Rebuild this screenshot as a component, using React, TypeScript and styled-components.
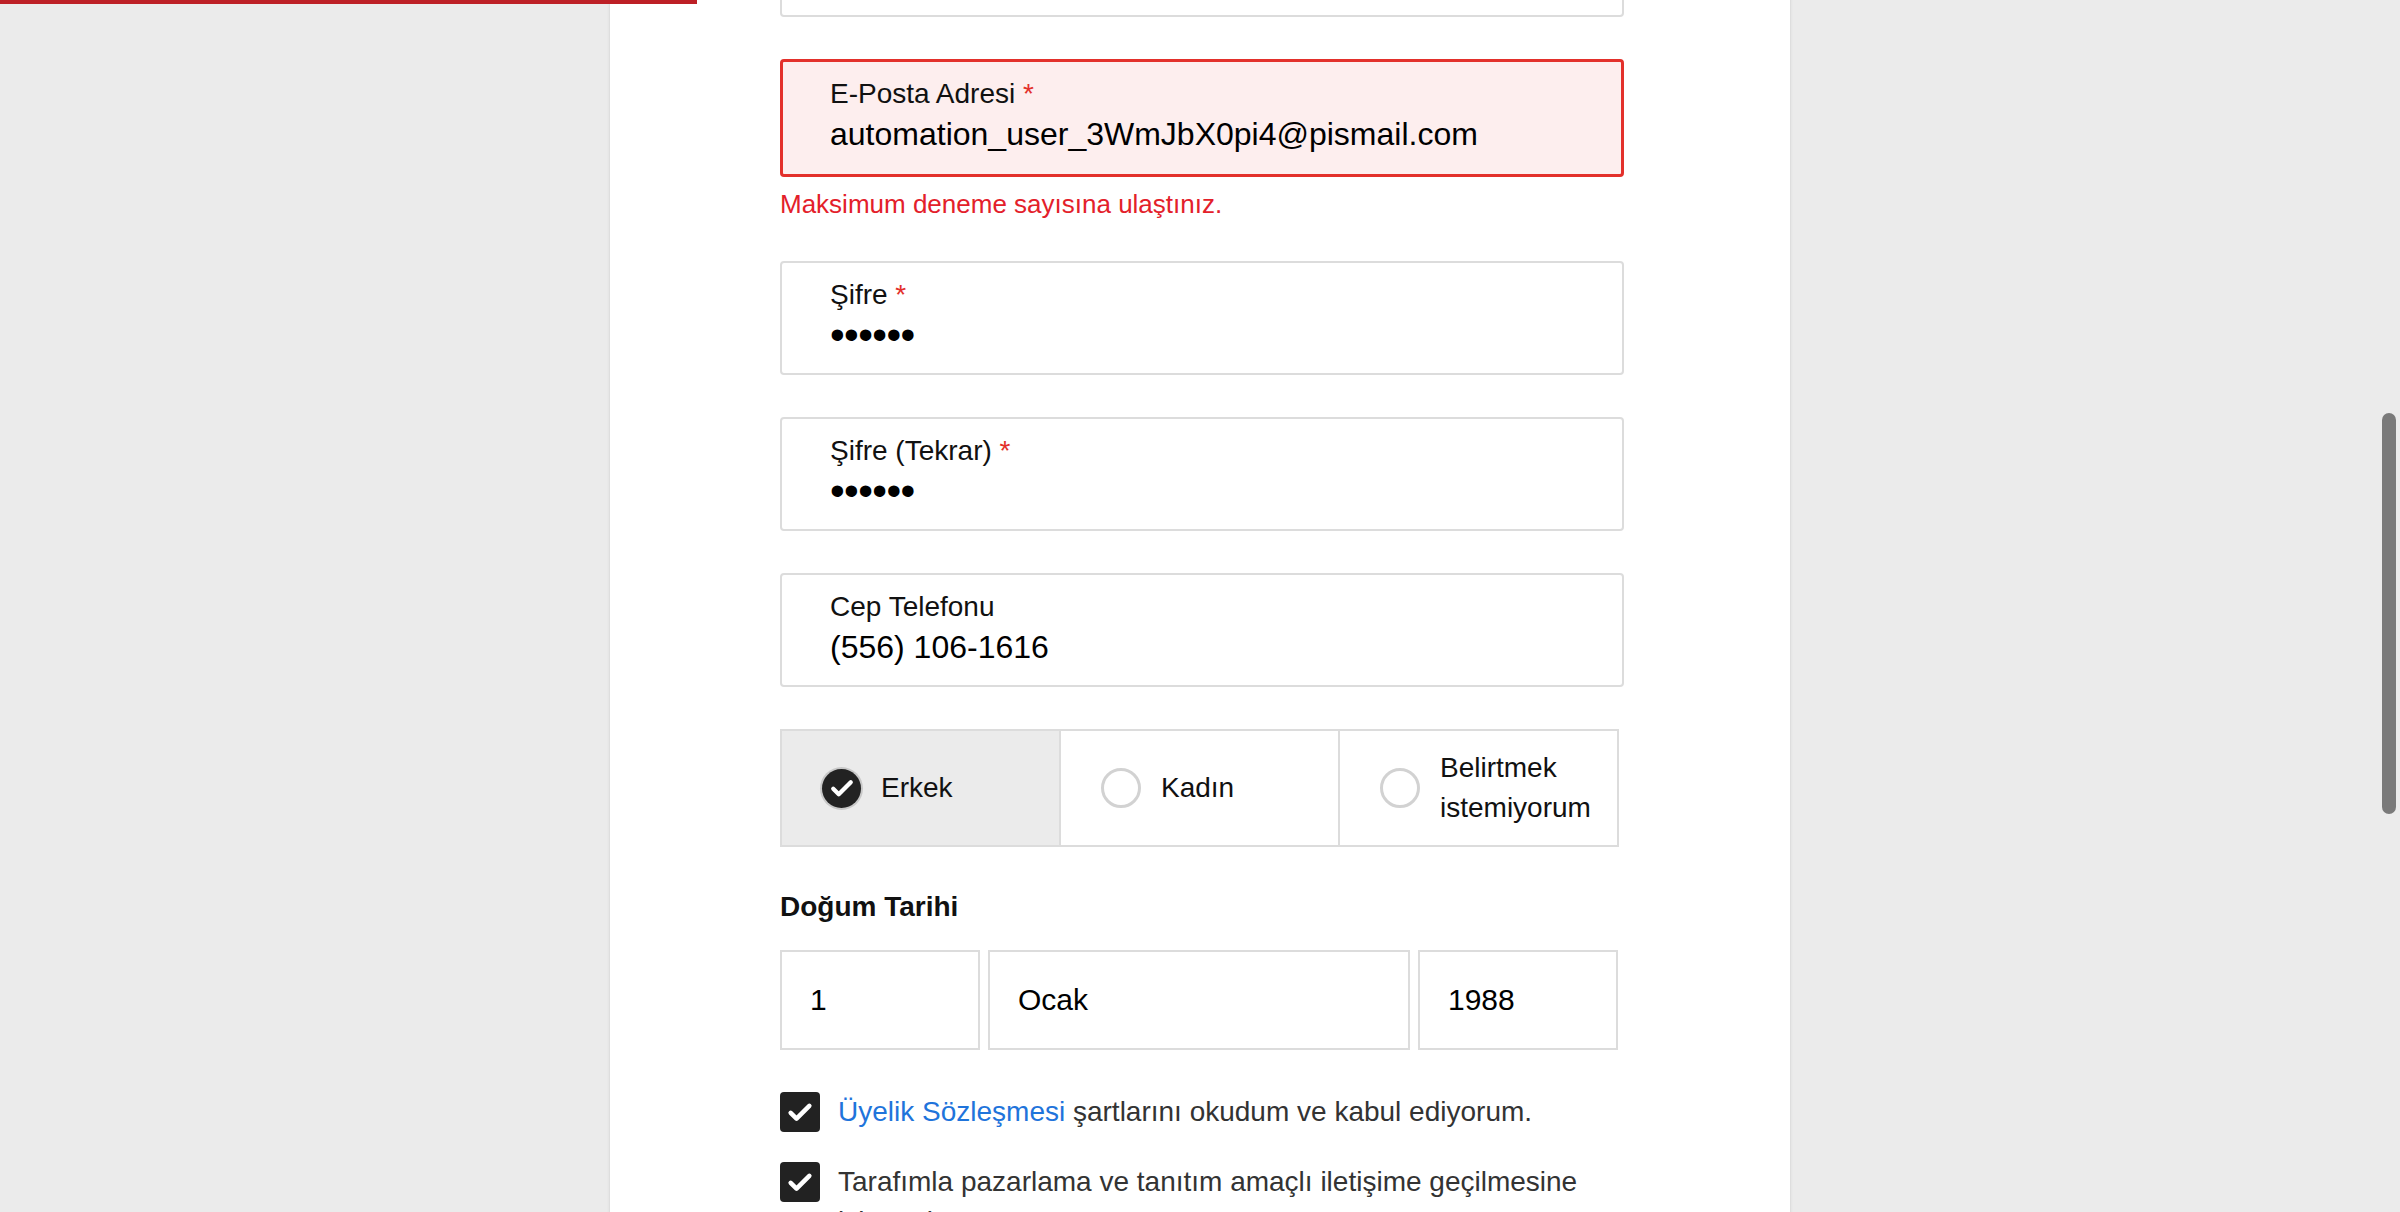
import React from "react";
import styled, { createGlobalStyle } from "styled-components";

const GlobalStyle = createGlobalStyle`
  html, body {
    margin: 0;
    padding: 0;
  }
  body {
    background: #ebebeb;
    font-family: "Liberation Sans", Arial, Helvetica, sans-serif;
    color: #111;
    height: 1212px;
    overflow: hidden;
  }
`;

const TopProgress = styled.div`
  position: fixed;
  top: 0;
  left: 0;
  width: 697px;
  height: 4px;
  background: #bd2026;
  z-index: 5;
`;

const ScrollThumb = styled.div`
  position: fixed;
  top: 413px;
  right: 4px;
  width: 14px;
  height: 401px;
  border-radius: 7px;
  background: #7a7a7a;
`;

const Panel = styled.main`
  box-sizing: border-box;
  width: 1182px;
  min-height: 1212px;
  margin: 0 auto;
  padding: 0 166px 0 170px;
  background: #fff;
  border-left: 1px solid #dedede;
  border-right: 1px solid #dedede;
  box-shadow: 0 0 3px rgba(0, 0, 0, 0.06);
`;

// page is scrolled down, the field above the e-mail is only half visible
const Form = styled.form`
  display: flex;
  flex-direction: column;
  gap: 42px;
  margin-top: -97px;
`;

const FieldGroup = styled.div`
  display: flex;
  flex-direction: column;
`;

const Field = styled.div<{ $error?: boolean }>`
  box-sizing: border-box;
  height: ${(p) => (p.$error ? "118px" : "114px")};
  padding: 14px 0 0 ${(p) => (p.$error ? "47px" : "48px")};
  border: ${(p) => (p.$error ? "3px solid #e3302b" : "2px solid #dcdcdc")};
  border-radius: 4px;
  background: ${(p) => (p.$error ? "#fdeeee" : "#fff")};
`;

const Label = styled.div`
  font-size: 28px;
  line-height: 36px;
  color: #111;
`;

const Required = styled.span`
  color: #e3302b;
`;

const Value = styled.div`
  margin-top: 2px;
  font-size: 32px;
  line-height: 40px;
  color: #000;
`;

const Masked = styled.div`
  margin-top: 2px;
  font-size: 42px;
  line-height: 40px;
  letter-spacing: -0.6px;
  color: #000;
`;

const ErrorText = styled.div`
  margin-top: 12px;
  font-size: 26px;
  line-height: 30px;
  color: #e3202a;
`;

const GenderRow = styled.div`
  display: flex;
  width: 839px;
  height: 118px;
`;

const GenderCell = styled.label<{ $active?: boolean }>`
  box-sizing: border-box;
  flex: 1;
  display: flex;
  align-items: center;
  gap: 20px;
  padding: 0 16px 0 40px;
  border: 2px solid #dcdcdc;
  background: ${(p) => (p.$active ? "#ebebeb" : "#fff")};
  font-size: 28px;
  line-height: 40px;
  color: #111;

  & + & {
    margin-left: -2px;
  }
`;

const RadioOn = styled.span`
  flex: none;
  width: 39px;
  height: 39px;
  border-radius: 50%;
  background: #222;
  box-shadow: 0 0 0 2px #c8c8c8;
  display: flex;
  align-items: center;
  justify-content: center;
`;

const RadioOff = styled.span`
  box-sizing: border-box;
  flex: none;
  width: 40px;
  height: 40px;
  border-radius: 50%;
  border: 3px solid #d2d2d2;
  background: #fff;
`;

const Section = styled.section`
  display: flex;
  flex-direction: column;
  gap: 25px;
`;

const SectionTitle = styled.h3`
  margin: 0;
  font-size: 28px;
  line-height: 36px;
  font-weight: 700;
  color: #111;
`;

const DateRow = styled.div`
  display: grid;
  grid-template-columns: 200px 1fr 200px;
  gap: 8px;
  width: 838px;
`;

const DateBox = styled.div`
  box-sizing: border-box;
  height: 100px;
  display: flex;
  align-items: center;
  padding-left: 28px;
  border: 2px solid #dcdcdc;
  font-size: 30px;
  color: #000;
`;

const Consents = styled.div`
  display: flex;
  flex-direction: column;
  gap: 30px;
`;

const ConsentRow = styled.label`
  display: flex;
  align-items: flex-start;
  gap: 18px;
  font-size: 28px;
  line-height: 40px;
  color: #333;
`;

const CheckBox = styled.span`
  flex: none;
  width: 40px;
  height: 40px;
  border-radius: 4px;
  background: #222;
  display: flex;
  align-items: center;
  justify-content: center;
`;

const Link = styled.a`
  color: #1f74db;
  text-decoration: none;
`;

const InfoIcon = styled.span`
  box-sizing: border-box;
  display: inline-flex;
  align-items: center;
  justify-content: center;
  width: 28px;
  height: 28px;
  margin-left: 16px;
  vertical-align: -4px;
  border-radius: 50%;
  border: 2px solid #c4c4c4;
  font-size: 18px;
  line-height: 1;
  color: #999;
`;

const Tick = ({ size }: { size: number }) => (
  <svg width={size} height={size} viewBox="0 0 24 24" fill="none">
    <path
      d="M5 12.6l4.4 4.4L19 7.4"
      stroke="#fff"
      strokeWidth={3.4}
      strokeLinecap="round"
      strokeLinejoin="round"
    />
  </svg>
);

const genders = [
  { label: "Erkek", active: true },
  { label: "Kadın", active: false },
  { label: "Belirtmek istemiyorum", active: false },
];

export default function App() {
  return (
    <>
      <GlobalStyle />
      <TopProgress />
      <Panel>
        <Form>
          <Field />

          <FieldGroup>
            <Field $error>
              <Label>
                E-Posta Adresi <Required>*</Required>
              </Label>
              <Value>automation_user_3WmJbX0pi4@pismail.com</Value>
            </Field>
            <ErrorText>Maksimum deneme sayısına ulaştınız.</ErrorText>
          </FieldGroup>

          <Field>
            <Label>
              Şifre <Required>*</Required>
            </Label>
            <Masked>••••••</Masked>
          </Field>

          <Field>
            <Label>
              Şifre (Tekrar) <Required>*</Required>
            </Label>
            <Masked>••••••</Masked>
          </Field>

          <Field>
            <Label>Cep Telefonu</Label>
            <Value>(556) 106-1616</Value>
          </Field>

          <GenderRow>
            {genders.map((g) => (
              <GenderCell key={g.label} $active={g.active}>
                {g.active ? (
                  <RadioOn>
                    <Tick size={30} />
                  </RadioOn>
                ) : (
                  <RadioOff />
                )}
                <span>{g.label}</span>
              </GenderCell>
            ))}
          </GenderRow>

          <Section>
            <SectionTitle>Doğum Tarihi</SectionTitle>
            <DateRow>
              <DateBox>1</DateBox>
              <DateBox>Ocak</DateBox>
              <DateBox>1988</DateBox>
            </DateRow>
          </Section>

          <Consents>
            <ConsentRow>
              <CheckBox>
                <Tick size={32} />
              </CheckBox>
              <span>
                <Link href="#">Üyelik Sözleşmesi</Link> şartlarını okudum ve kabul
                ediyorum.
              </span>
            </ConsentRow>
            <ConsentRow>
              <CheckBox>
                <Tick size={32} />
              </CheckBox>
              <span>
                Tarafımla pazarlama ve tanıtım amaçlı iletişime geçilmesine izin
                veriyorum.
                <InfoIcon>i</InfoIcon>
              </span>
            </ConsentRow>
          </Consents>
        </Form>
      </Panel>
      <ScrollThumb />
    </>
  );
}
